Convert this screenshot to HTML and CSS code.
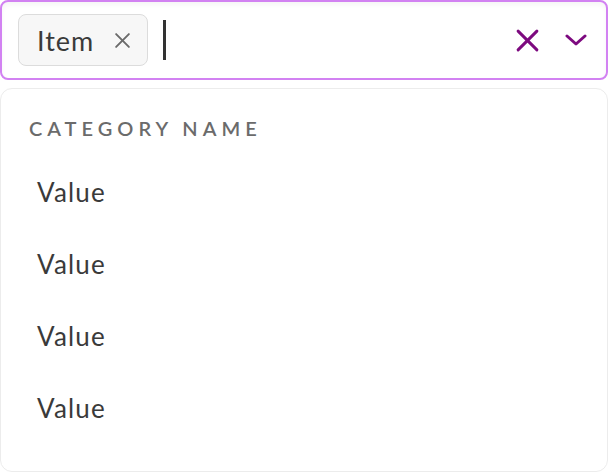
FILE: index.html
```html
<!DOCTYPE html>
<html lang="en">
<head>
    <meta charset="UTF-8">
    <meta name="viewport" content="width=device-width, initial-scale=1.0">
    <title>Select</title>
    <link rel="stylesheet" href="styles.css">
</head>
<body>
    <div class="select">
        <div class="control">
            <div class="values">
                <span class="chip">
                    <span class="chip-label">Item</span>
                    <svg class="chip-remove" viewBox="0 0 16 16" fill="none" stroke="currentColor" stroke-width="1.8" stroke-linecap="round">
                        <line x1="2" y1="2" x2="14" y2="14"></line>
                        <line x1="14" y1="2" x2="2" y2="14"></line>
                    </svg>
                </span>
                <span class="cursor"></span>
            </div>
            <div class="indicators">
                <svg class="clear" viewBox="0 0 22 22" fill="none" stroke="currentColor" stroke-width="2.8" stroke-linecap="round">
                    <line x1="2" y1="2" x2="20" y2="20"></line>
                    <line x1="20" y1="2" x2="2" y2="20"></line>
                </svg>
                <svg class="chevron" viewBox="0 0 22 14" fill="none" stroke="currentColor" stroke-width="3" stroke-linecap="round" stroke-linejoin="round">
                    <polyline points="2,3 11,11 20,3"></polyline>
                </svg>
            </div>
        </div>

        <div class="menu">
            <div class="group-title">CATEGORY NAME</div>
            <ul class="options">
                <li>Value</li>
                <li>Value</li>
                <li>Value</li>
                <li>Value</li>
            </ul>
        </div>
    </div>
</body>
</html>
```

FILE: styles.css
```css
:root {
    --accent: #d282f2;
    --accent-dark: #7d0a7f;
    --text-color: #333;
    --muted: #6b6b6b;
    --border-color: #ececec;
}

* {
    margin: 0;
    padding: 0;
    box-sizing: border-box;
}

body {
    font-family: Lato, "Noto Sans", sans-serif;
    color: var(--text-color);
    background: #fff;
}

.select {
    width: 608px;
}

.control {
    height: 80px;
    border: 2px solid var(--accent);
    border-radius: 8px;
    box-shadow: inset 0 3px 5px rgba(0, 0, 0, 0.04);
    display: flex;
    align-items: center;
    justify-content: space-between;
    padding: 0 19px 0 16px;
}

.values {
    display: flex;
    align-items: center;
    gap: 15px;
}

.chip {
    display: inline-flex;
    align-items: center;
    height: 52px;
    padding: 0 16px 0 18px;
    gap: 20px;
    background: #f7f7f7;
    border: 1px solid #dcdcdc;
    border-radius: 8px;
}

.chip-label {
    font-size: 27px;
    letter-spacing: 1px;
    color: #3a3a3a;
}

.chip-remove {
    width: 17px;
    height: 17px;
    color: var(--muted);
}

.cursor {
    width: 3px;
    height: 40px;
    background: #333;
}

.indicators {
    display: flex;
    align-items: center;
    gap: 26px;
    color: var(--accent-dark);
}

.clear {
    width: 23px;
    height: 23px;
}

.chevron {
    width: 22px;
    height: 14px;
}

.menu {
    margin-top: 8px;
    height: 384px;
    border: 1px solid var(--border-color);
    border-radius: 12px;
    padding-top: 21px;
}

.group-title {
    padding-left: 28px;
    font-size: 20px;
    font-weight: 600;
    letter-spacing: 5px;
    color: var(--muted);
    line-height: 36px;
}

.options {
    list-style: none;
    margin-top: 10px;
}

.options li {
    padding-left: 36px;
    height: 72px;
    line-height: 72px;
    font-size: 26px;
    letter-spacing: 1.2px;
    color: #3a3a3a;
}
```
